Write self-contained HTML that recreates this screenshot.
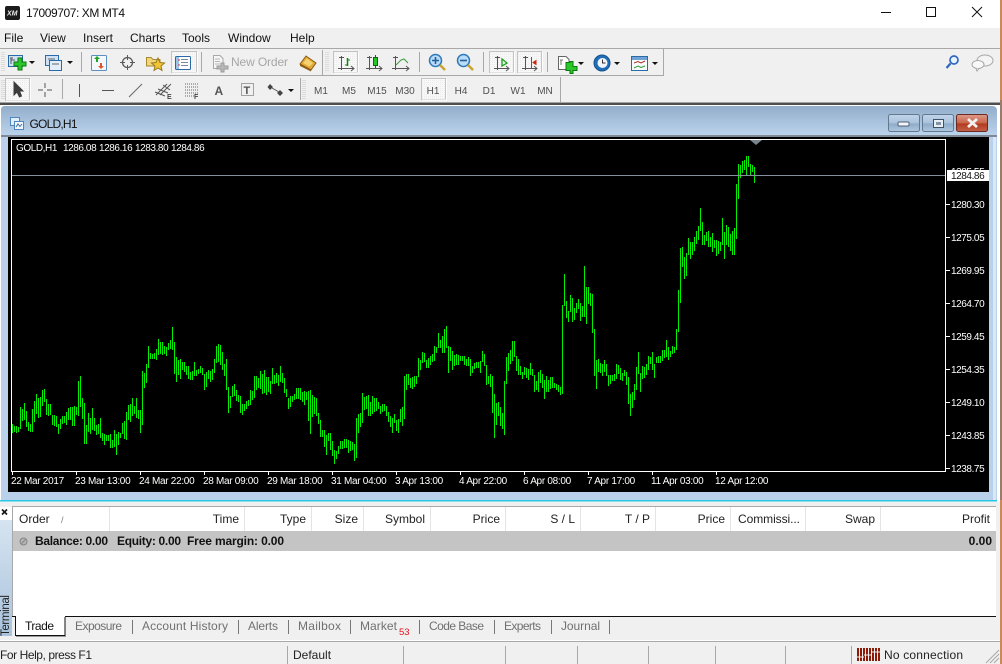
<!DOCTYPE html>
<html>
<head>
<meta charset="utf-8">
<style>
html,body{margin:0;padding:0;background:#fff;width:1002px;height:664px;overflow:hidden}
svg{display:block;position:absolute;left:0;top:0}
text{font-family:"Liberation Sans",sans-serif;font-size:12px;fill:#1a1a1a;white-space:pre}
.m text{fill:#111}
.tf text{font-size:10px;fill:#505050;text-anchor:middle}
.h text{text-anchor:end;fill:#222}
.c text{font-size:10px;fill:#fff}
.p text{letter-spacing:-.42px}
.d text{letter-spacing:-.3px}
.t text{fill:#707070}
.b text{font-weight:bold;fill:#111}
.s text{fill:#222}
.ic{shape-rendering:auto}
</style>
</head>
<body>
<svg width="1002" height="664" viewBox="0 0 1002 664" xmlns="http://www.w3.org/2000/svg">
<defs>
<linearGradient id="tb" x1="0" y1="0" x2="0" y2="1"><stop offset="0" stop-color="#93aecb"/><stop offset="1" stop-color="#b9d1ea"/></linearGradient>
<linearGradient id="wb" x1="0" y1="0" x2="0" y2="1"><stop offset="0" stop-color="#c2d5ea"/><stop offset=".5" stop-color="#a9c2dc"/><stop offset=".55" stop-color="#8eabc9"/><stop offset="1" stop-color="#b0c8e0"/></linearGradient>
<linearGradient id="wr" x1="0" y1="0" x2="0" y2="1"><stop offset="0" stop-color="#dd9a88"/><stop offset=".5" stop-color="#c8654c"/><stop offset=".55" stop-color="#b23a1e"/><stop offset="1" stop-color="#c4614a"/></linearGradient>
<linearGradient id="tv" x1="0" y1="0" x2="0" y2="1"><stop offset="0" stop-color="#d6e4f1"/><stop offset="1" stop-color="#a9c3dc"/></linearGradient>
<pattern id="ch" width="2" height="2" patternUnits="userSpaceOnUse"><rect width="2" height="2" fill="#f8f8f8"/><rect width="1" height="1" fill="#ececec"/></pattern>
</defs>

<!-- title bar -->
<rect x="0" y="0" width="1002" height="28" fill="#fff"/>
<rect x="5" y="6" width="15" height="14" rx="2" fill="#1b1b1b"/>
<text x="7" y="15.5" style="font-size:7px;font-weight:bold;font-style:italic;fill:#eee">XM</text>
<text x="26" y="17" textLength="99" style="font-size:12px;fill:#111">17009707: XM MT4</text>
<g stroke="#111" fill="none" shape-rendering="crispEdges">
<path d="M881 12.5H891"/>
<rect x="926.5" y="7.5" width="9" height="9"/>
</g>
<path d="M972 7L982 17M982 7L972 17" stroke="#111" fill="none"/>

<!-- menu bar + toolbars -->
<rect x="0" y="28" width="1000" height="77" fill="#f0f0f0"/>
<g class="m">
<text x="4" y="42">File</text><text x="40" y="42">View</text><text x="83" y="42">Insert</text><text x="130" y="42">Charts</text><text x="182" y="42">Tools</text><text x="228" y="42">Window</text><text x="290" y="42">Help</text>
</g>
<g shape-rendering="crispEdges">
<rect x="0" y="48" width="1000" height="1" fill="#a8a8a8"/>
<rect x="0" y="75" width="664" height="1" fill="#a8a8a8"/>
<rect x="663" y="49" width="1" height="27" fill="#a8a8a8"/>
<rect x="322" y="50" width="1" height="25" fill="#a8a8a8"/>
<rect x="560" y="77" width="1" height="25" fill="#a8a8a8"/>
<rect x="81" y="52" width="1" height="20" fill="#a8a8a8"/>
<rect x="201" y="52" width="1" height="20" fill="#a8a8a8"/>
<rect x="419" y="52" width="1" height="20" fill="#a8a8a8"/>
<rect x="483" y="52" width="1" height="20" fill="#a8a8a8"/>
<rect x="547" y="52" width="1" height="20" fill="#a8a8a8"/>
<rect x="62" y="79" width="1" height="20" fill="#a8a8a8"/>
<rect x="300" y="78" width="1" height="22" fill="#a8a8a8"/>
<!-- grips -->
<path d="M2 52V72M4 52V72M326 52V72M328 52V72M2 80V99M4 80V99M303 80V99M305 80V99" stroke="#c8c8c8" stroke-dasharray="1 1"/>
<!-- pressed boxes -->
<g fill="url(#ch)" stroke="#c4c4c4">
<rect x="171.500" y="51.500" width="25" height="21"/>
<rect x="333.500" y="51.500" width="24" height="21"/>
<rect x="489.500" y="51.500" width="24" height="21"/>
<rect x="517.500" y="51.500" width="24" height="21"/>
<rect x="5.500" y="78.500" width="24" height="22"/>
<rect x="421.500" y="78.500" width="24" height="21"/>
</g>
<path d="M197.500 52V73H172M358.500 52V73H334M514.500 52V73H490M542.500 52V73H518M30.500 79V101H6M446.500 79V100H422" stroke="#fff" fill="none"/>
<rect x="0" y="102" width="1000" height="1" fill="#a4a4a4"/>
<rect x="0" y="103" width="1000" height="2" fill="#4e4e4e"/>
</g>

<!-- toolbar row 1 icons -->
<g class="ic">
<!-- new chart -->
<rect x="8.500" y="55.500" width="14" height="11" fill="#cfe2f5" stroke="#2b6aa8"/>
<path d="M11 58V64M13 58H10M11 60H15" stroke="#555" fill="none"/>
<path d="M18 58h4v4h4v4h-4v4h-4v-4h-4v-4h4z" fill="#2cc52c" stroke="#0a7a0a"/>
<path d="M29 61h6l-3 3z" fill="#111"/>
<!-- profiles -->
<rect x="45.500" y="55.500" width="13" height="10" fill="#cfe2f5" stroke="#2b6aa8"/>
<rect x="49.500" y="60.500" width="12" height="10" fill="#e2eefa" stroke="#2b6aa8"/>
<path d="M48 59H55M52 64H59" stroke="#666"/>
<path d="M67 61h6l-3 3z" fill="#111"/>
<!-- market watch -->
<rect x="91.500" y="55.500" width="15" height="15" rx="1" fill="#f4f8fc" stroke="#5b8fc0"/>
<path d="M96 62V59H94L97 56L100 59H98V62z" fill="#1fa51f"/>
<path d="M100 63V66H98L101 69L104 66H102V63z" fill="#e0552a"/>
<!-- crosshair -->
<circle cx="127.500" cy="62.500" r="5" fill="none" stroke="#5a5a5a" stroke-width="1.300"/>
<path d="M127.500 55V60M127.500 65V70M120 62.500H125M130 62.500H135" stroke="#5a5a5a"/>
<!-- folder star -->
<path d="M146.500 66V57.500H151L153 59.500H160V66z" fill="#f4d67a" stroke="#a88a2e"/>
<path d="M158 58L160 62.500L164.500 63L161 66L162 70.500L158 68L154 70.500L155 66L151.500 63L156 62.500z" fill="#f2c632" stroke="#977a1c"/>
<!-- navigator -->
<rect x="175.500" y="56.500" width="15" height="13" rx="1" fill="#fff" stroke="#2b6aa8"/>
<rect x="176" y="57" width="3" height="12" fill="#9cc2e6"/>
<path d="M181 59.500H188M181 62.500H188M181 65.500H188" stroke="#7a8a9a"/>
<path d="M178 60H180M178 65H180" stroke="#d33"/>
<!-- new order -->
<path d="M213.500 55.500H220L223 58.500V68.500H213.500z" fill="#f6f6f6" stroke="#a8a8a8"/>
<path d="M215 59H220M215 61.500H220M215 64H220" stroke="#b5b5b5"/>
<path d="M221 63h3v3h4v3h-4v3h-3v-3h-4v-3h4z" fill="#b8b8b8" stroke="#9a9a9a"/>
<!-- autotrading gold -->
<path d="M300 64L306 56L316 63L311 70z" fill="#e1a93a" stroke="#8a5c12"/>
<path d="M303 63L307 58.500L313 63L309.500 66.500z" fill="#f6d36e"/>
<path d="M300 64L311 70V71.500L300 66z" fill="#8f5e14"/>
<!-- bar chart -->
<g stroke="#555" fill="none">
<path d="M341.500 56V70M339 57.500H344M338 68.500H354M351 66L354 68.500L351 71"/>
<path d="M347.500 58V66" stroke="#0a8a0a" stroke-width="1.500"/><path d="M347 60H350M345 65H348" stroke="#0a8a0a"/>
<path d="M369.500 56V70M367 57.500H372M366 68.500H382M379 66L382 68.500L379 71"/>
<path d="M395.500 56V70M393 57.500H398M392 68.500H409M406 66L409 68.500L406 71"/>
</g>
<rect x="373.500" y="57.500" width="4" height="8" fill="#28c428" stroke="#0b6a0b"/><path d="M375.500 55V57M375.500 66V68" stroke="#0b6a0b"/>
<path d="M396 65L401 60L404 59L408 63" stroke="#3a9a3a" fill="none"/>
<!-- zoom -->
<circle cx="435.500" cy="60.500" r="6" fill="#bcdcf5" stroke="#2f79bd" stroke-width="1.500"/>
<path d="M432 60.500H439M435.500 57V64" stroke="#1d5f9f" stroke-width="1.600"/>
<path d="M440 65L445 70" stroke="#c7a42e" stroke-width="2.500"/>
<circle cx="463.500" cy="60.500" r="6" fill="#bcdcf5" stroke="#2f79bd" stroke-width="1.500"/>
<path d="M460 60.500H467" stroke="#1d5f9f" stroke-width="1.600"/>
<path d="M468 65L473 70" stroke="#c7a42e" stroke-width="2.500"/>
<!-- shift/autoscroll -->
<g stroke="#555" fill="none">
<path d="M497.500 56V70M495 57.500H500M494 68.500H509M506 66L509 68.500L506 71"/>
<path d="M525.500 56V70M523 57.500H528M522 68.500H537M534 66L537 68.500L534 71"/>
</g>
<path d="M502 59L507 63L502 66z" fill="none" stroke="#18a018" stroke-width="1.300"/>
<path d="M531.500 57V68" stroke="#3b5fa0"/><path d="M536 60.500L533 62.500L536 64.500z" fill="#c8280c" stroke="#c8280c"/>
<!-- templates -->
<path d="M558.500 56.500H566L569 59.500V69.500H558.500z" fill="#fff" stroke="#666"/>
<path d="M561 60V65M560 60H563" stroke="#777"/>
<path d="M566 63h4v-1h3v5h4v4h-4v3h-3v-3h-4z" fill="#2cc52c" stroke="#0a7a0a" transform="translate(0,-0.500)"/>
<path d="M578 62h6l-3 3z" fill="#111"/>
<!-- clock -->
<circle cx="602" cy="63" r="8" fill="#1f6fb8" stroke="#13528f"/>
<circle cx="602.500" cy="63" r="5" fill="#f2f6fa"/>
<path d="M602.500 59.500V63H605.500" stroke="#333" fill="none"/>
<path d="M614 62h6l-3 3z" fill="#111"/>
<!-- indicators -->
<rect x="631.500" y="56.500" width="16" height="14" fill="#f8fbfe" stroke="#2b6aa8"/>
<rect x="632" y="57" width="15" height="3" fill="#6fa3d6"/>
<path d="M634 63L638 61.500L641 63L645 61" stroke="#a8321e" fill="none"/>
<path d="M634 68L638 66L641 67.500L645 66" stroke="#2a9a2a" fill="none"/>
<path d="M652 62h6l-3 3z" fill="#111"/>
<!-- search, chat -->
<circle cx="954" cy="60" r="4" fill="#e8f2fb" stroke="#2e66bf" stroke-width="1.700"/>
<path d="M950.500 63.500L946.500 68" stroke="#2e66bf" stroke-width="2.200"/>
<ellipse cx="985" cy="60.500" rx="8" ry="5.500" fill="#f4f4f4" stroke="#a6a6a6"/>
<ellipse cx="978" cy="64.500" rx="6" ry="4" fill="#f8f8f8" stroke="#a6a6a6"/>
<path d="M976 68.500L977 71L979 68.500" fill="#f8f8f8" stroke="#a6a6a6"/>
</g>
<text x="231" y="66" textLength="57" style="fill:#a6a6a6;font-size:12px">New Order</text>

<!-- toolbar row 2 -->
<path d="M14 82V95L17 92L19.500 97L21.500 96L19.500 91H23z" fill="#3c3c3c" stroke="#3c3c3c"/>
<path d="M45 83V88M45 92V97M38 90H43M47 90H52" stroke="#555" shape-rendering="crispEdges"/>
<path d="M79.500 84V97M102 90.500H114" stroke="#555" shape-rendering="crispEdges"/>
<path d="M129 97L142 84" stroke="#666"/>
<path d="M156 95L167 84M160 95L171 84M158 89L168 93M155 92L165 96M163 85L170 90" stroke="#555" fill="none"/>
<text x="167" y="99" style="font-size:7px;font-weight:bold;fill:#444">E</text>
<path d="M185 84H198M185 87H198M185 90H198M185 93H198M185 96H194" stroke="#666" stroke-dasharray="1 1" shape-rendering="crispEdges"/>
<text x="194" y="99" style="font-size:7px;font-weight:bold;fill:#444">F</text>
<text x="214.500" y="95" style="font-size:12px;font-weight:bold;fill:#555">A</text>
<rect x="241.500" y="83.500" width="12" height="12" fill="none" stroke="#555" stroke-dasharray="1 1" shape-rendering="crispEdges"/>
<text x="243.500" y="94" style="font-size:11px;font-weight:bold;fill:#555">T</text>
<path d="M270 84L273 87L270 90L267.500 87zM280 90L283 93L280 96L277 93z" fill="#444"/>
<path d="M272 88L279 92" stroke="#555"/>
<path d="M288 89h6l-3 3z" fill="#111"/>
<g class="tf">
<text x="321" y="94">M1</text><text x="349" y="94">M5</text><text x="377" y="94">M15</text><text x="405" y="94">M30</text><text x="433" y="94">H1</text><text x="461" y="94">H4</text><text x="489" y="94">D1</text><text x="518" y="94">W1</text><text x="545" y="94">MN</text>
</g>

<!-- chart window -->
<path d="M1 501V110Q1 106 5 106H992Q997 106 997 111V501z" fill="#b9d1ea"/>
<path d="M1 134V110Q1 106 5 106H992Q997 106 997 111V134z" fill="url(#tb)"/>
<rect x="0" y="500" width="997" height="1.500" fill="#27c7e6" shape-rendering="crispEdges"/>
<rect x="1" y="135" width="996" height="2" fill="#7f8a96" shape-rendering="crispEdges"/>
<rect x="993" y="137" width="3" height="363" fill="#d9e8f6" shape-rendering="crispEdges"/>
<rect x="8" y="137" width="981" height="355" fill="#000" shape-rendering="crispEdges"/>
<!-- window icon -->
<rect x="10.500" y="117.500" width="9" height="8" fill="#e2eefa" stroke="#4f86bd"/>
<rect x="14.500" y="121.500" width="9" height="8" fill="#f2f7fc" stroke="#4f86bd"/>
<path d="M16 127L18 124L20 126.500L22 124" stroke="#3b6ea3" fill="none"/>
<text x="29.500" y="128" textLength="48" style="font-size:12px;fill:#111">GOLD,H1</text>
<!-- window buttons -->
<rect x="888.500" y="114.500" width="31" height="17" rx="2" fill="url(#wb)" stroke="#62788e"/>
<rect x="898" y="122" width="11" height="4" rx="1" fill="#f4f7fa" stroke="#4c5f73"/>
<rect x="922.500" y="114.500" width="31" height="17" rx="2" fill="url(#wb)" stroke="#62788e"/>
<rect x="933.500" y="119.500" width="10" height="8" fill="#e8eef4" stroke="#3f5266"/>
<rect x="936" y="122" width="5" height="3" fill="#7f94aa"/>
<rect x="956.500" y="114.500" width="31" height="17" rx="2" fill="url(#wr)" stroke="#6a2a22"/>
<path d="M968 119L977 127M977 119L968 127" stroke="#f2f2f2" stroke-width="2.800"/>

<!-- plot -->
<path id="bars" d="" stroke="#00f000" stroke-width="1" fill="none" shape-rendering="crispEdges"/>
<rect x="11.500" y="139.500" width="934" height="332" fill="none" stroke="#fff" shape-rendering="crispEdges"/>
<rect x="12" y="175" width="933" height="1" fill="#84909c" shape-rendering="crispEdges"/>
<path d="M750 140H762L756 145z" fill="#77848f"/>
<g shape-rendering="crispEdges" fill="#fff">
<rect x="946" y="204" width="4" height="1"/><rect x="946" y="237" width="4" height="1"/><rect x="946" y="270" width="4" height="1"/><rect x="946" y="303" width="4" height="1"/><rect x="946" y="336" width="4" height="1"/><rect x="946" y="369" width="4" height="1"/><rect x="946" y="402" width="4" height="1"/><rect x="946" y="435" width="4" height="1"/><rect x="946" y="468" width="4" height="1"/>
<rect x="12" y="472" width="1" height="3"/><rect x="76" y="472" width="1" height="3"/><rect x="140" y="472" width="1" height="3"/><rect x="204" y="472" width="1" height="3"/><rect x="268" y="472" width="1" height="3"/><rect x="332" y="472" width="1" height="3"/><rect x="396" y="472" width="1" height="3"/><rect x="460" y="472" width="1" height="3"/><rect x="524" y="472" width="1" height="3"/><rect x="588" y="472" width="1" height="3"/><rect x="652" y="472" width="1" height="3"/><rect x="716" y="472" width="1" height="3"/>
</g>
<g class="c p">
<text x="16" y="151">GOLD,H1</text>
<text x="63" y="151">1286.08</text>
<text x="99" y="151">1286.16</text>
<text x="135" y="151">1283.80</text>
<text x="171" y="151">1284.86</text>
<text x="951" y="175">1285.55</text>
<text x="951" y="208">1280.30</text>
<text x="951" y="241">1275.05</text>
<text x="951" y="274">1269.95</text>
<text x="951" y="307">1264.70</text>
<text x="951" y="340">1259.45</text>
<text x="951" y="373">1254.35</text>
<text x="951" y="406">1249.10</text>
<text x="951" y="439">1243.85</text>
<text x="951" y="472">1238.75</text>
</g>
<g class="c d">
<text x="11" y="484">22 Mar 2017</text>
<text x="75" y="484">23 Mar 13:00</text>
<text x="139" y="484">24 Mar 22:00</text>
<text x="203" y="484">28 Mar 09:00</text>
<text x="267" y="484">29 Mar 18:00</text>
<text x="331" y="484">31 Mar 04:00</text>
<text x="395" y="484">3 Apr 13:00</text>
<text x="459" y="484">4 Apr 22:00</text>
<text x="523" y="484">6 Apr 08:00</text>
<text x="587" y="484">7 Apr 17:00</text>
<text x="651" y="484">11 Apr 03:00</text>
<text x="715" y="484">12 Apr 12:00</text>
</g>
<rect x="947" y="170" width="42" height="11" fill="#fff" shape-rendering="crispEdges"/>
<text x="951" y="179" style="font-size:10px;fill:#111;letter-spacing:-.42px">1284.86</text>

<!-- terminal -->
<rect x="0" y="501.500" width="1000" height="162.500" fill="#f0f0f0"/>
<rect x="0" y="520" width="12" height="116" fill="url(#tv)"/>
<rect x="0" y="507" width="12" height="13" fill="#fff"/>
<path d="M2 509.500L7 514.500M7 509.500L2 514.500" stroke="#111" stroke-width="1.600"/>
<text transform="translate(9,636) rotate(-90)" textLength="41" style="font-size:11.500px;fill:#222">Terminal</text>
<rect x="12" y="506" width="984" height="110" fill="#fff" shape-rendering="crispEdges"/>
<rect x="12" y="506" width="984" height="1" fill="#a8a8a8" shape-rendering="crispEdges"/>
<rect x="12" y="506" width="1" height="110" fill="#a8a8a8" shape-rendering="crispEdges"/>
<path d="M109.500 507V531M244.500 507V531M311.500 507V531M363.500 507V531M430.500 507V531M505.500 507V531M580.500 507V531M655.500 507V531M730.500 507V531M805.500 507V531M880.500 507V531" stroke="#e4e4e4" shape-rendering="crispEdges"/>
<text x="19" y="523" style="fill:#222">Order</text>
<text x="61" y="523" style="fill:#777;font-size:9px">/</text>
<g class="h">
<text x="239" y="523">Time</text><text x="306" y="523">Type</text><text x="358" y="523">Size</text><text x="425" y="523">Symbol</text><text x="500" y="523">Price</text><text x="575" y="523">S / L</text><text x="650" y="523">T / P</text><text x="725" y="523">Price</text><text x="738" y="523" text-anchor="start" style="text-anchor:start" textLength="62">Commissi...</text><text x="875" y="523">Swap</text><text x="990" y="523">Profit</text>
</g>
<rect x="13" y="531" width="983" height="20" fill="#c4c4c4" shape-rendering="crispEdges"/>
<circle cx="23.500" cy="541.500" r="3.500" fill="#b4b4b4" stroke="#858585"/>
<path d="M21.500 543.500L25.500 539.500" stroke="#858585"/>
<g class="b">
<text x="35" y="545" textLength="73">Balance: 0.00</text><text x="117" y="545" textLength="64">Equity: 0.00</text><text x="187" y="545" textLength="97">Free margin: 0.00</text><text x="992" y="545" text-anchor="end">0.00</text>
</g>
<rect x="12" y="616" width="984" height="1" fill="#111" shape-rendering="crispEdges"/>
<path d="M15.500 616V635.500H65V616" fill="#fff" stroke="#111"/>
<rect x="16" y="615" width="49" height="2" fill="#fff" shape-rendering="crispEdges"/>
<rect x="16" y="636" width="50" height="1" fill="#999" shape-rendering="crispEdges"/>
<text x="25" y="630" textLength="29" style="fill:#111">Trade</text>
<g class="t">
<text x="75" y="630" textLength="47">Exposure</text><text x="142" y="630" textLength="86">Account History</text><text x="248" y="630" textLength="30">Alerts</text><text x="298" y="630" textLength="43">Mailbox</text><text x="360" y="630" textLength="37">Market</text><text x="429" y="630" textLength="55">Code Base</text><text x="504" y="630" textLength="37">Experts</text><text x="561" y="630" textLength="39">Journal</text>
</g>
<text x="399" y="635" style="font-size:9.500px;fill:#e8101c">53</text>
<path d="M132.500 620V634M238.500 620V634M288.500 620V634M350.500 620V634M419.500 620V634M494.500 620V634M551.500 620V634M609.500 620V634" stroke="#777" shape-rendering="crispEdges"/>

<!-- status bar -->
<rect x="0" y="641" width="1000" height="1" fill="#a8a8a8" shape-rendering="crispEdges"/>
<rect x="0" y="640" width="1000" height="1" fill="#fff" shape-rendering="crispEdges"/>
<path d="M287.500 646V664M403.500 646V664M505.500 646V664M577.500 646V664M648.500 646V664M715.500 646V664M785.500 646V664M851.500 646V664" stroke="#a8a8a8" shape-rendering="crispEdges"/>
<g class="s"><text x="0" y="659" textLength="92">For Help, press F1</text><text x="293" y="659">Default</text><text x="884" y="659" textLength="79">No connection</text></g>
<g shape-rendering="crispEdges">
<rect x="857" y="648" width="23" height="13" fill="#8c1a06"/>
<path d="M859.500 648V661M862.500 648V661M865.500 648V661M868.500 648V661M871.500 648V661M874.500 648V661M877.500 648V661" stroke="#f0f0f0"/>
<path d="M857 657H864M864 655H872M872 652H880" stroke="#f0f0f0"/>
</g>
<path d="M986 663L999 650M990 663L999 654M994 663L999 658" stroke="#a8a8a8"/>
<!-- right edge strip -->
<rect x="1000" y="0" width="2" height="664" fill="#c98a5a" shape-rendering="crispEdges"/>
<rect x="1000" y="100" width="2" height="400" fill="#9a7a6a" shape-rendering="crispEdges"/>
</svg>
<script>
var a=[342,369,348,366,348,369,351,366,291,357,297,333,279,330,303,351,336,363,342,366,297,366,273,336,252,312,264,324,261,321,240,288,237,276,267,315,282,318,282,315,315,345,315,348,318,351,342,372,327,357,318,342,318,339,306,345,294,330,291,330,291,348,288,348,291,315,213,318,198,291,264,327,279,402,345,402,309,366,324,372,294,360,324,363,345,375,342,372,324,384,369,393,372,405,375,393,375,393,372,414,390,414,360,411,372,435,366,405,369,384,339,372,333,387,306,390,285,330,282,336,264,318,288,312,264,324,300,327,300,369,183,345,189,234,162,219,108,174,129,147,132,147,129,147,117,150,87,135,96,132,96,135,108,132,111,138,99,120,90,117,51,120,96,192,141,216,150,195,147,207,156,180,156,186,168,195,168,207,186,210,183,210,156,198,180,198,177,192,168,189,174,195,192,240,186,231,180,207,183,216,177,210,147,189,108,159,102,156,105,165,126,180,162,198,147,240,231,309,258,294,228,261,222,258,240,273,255,276,258,309,282,315,282,303,273,297,270,288,240,285,243,270,198,264,198,240,204,234,183,237,192,252,180,249,201,255,201,246,213,252,174,222,195,222,189,219,195,228,168,216,189,219,204,249,237,261,264,297,258,291,258,276,252,270,234,267,234,267,234,270,246,276,243,285,246,270,243,333,240,372,255,321,261,312,264,318,309,342,330,381,360,381,360,411,375,435,369,393,369,420,393,438,420,462,423,447,408,432];
var b=[543,567,543,567,537,564,537,564,540,579,543,573,546,570,552,603,474,594,462,519,459,501,399,489,411,450,408,447,405,468,426,468,408,462,414,456,414,453,426,447,438,462,432,456,432,453,438,468,456,486,468,501,474,519,462,489,480,513,477,519,447,486,441,498,348,477,342,390,342,375,354,384,351,387,348,381,348,372,294,351,300,330,276,309,279,306,300,324,294,324,288,315,282,306,258,303,261,279,219,264,240,264,228,279,207,279,198,264,258,339,261,303,273,330,285,318,282,315,285,315,288,303,288,303,288,315,297,318,291,318,297,348,318,339,309,327,306,324,306,324,303,339,273,306,282,318,315,375,348,372,342,381,348,459,402,534,429,495,426,468,441,498,459,507,363,525,291,372,279,333,270,312,243,303,243,291,288,333,297,345,318,345,336,357,321,345,324,354,327,360,309,345,327,348,345,396,363,390,336,396,330,369,342,384,360,417,348,396,360,396,351,387,351,384,369,384,372,390,375,396,381,405,135,402,42,138,123,174,153,186,105,156,114,186,144,180,129,159,117,147,129,183,138,171,18,171,81,192,81,132,99,138,102,219,207,348,300,387,297,336,309,339,312,348,300,336,312,348,345,378,345,372,345,363,342,363,312,357,315,342,324,360,339,363,330,348,336,375,351,432,402,468,396,444,372,420,321,390,276,342,339,396,318,357,321,354,312,345,288,330,291,312,276,330,312,354,291,309,288,309,288,309,270,303,270,294,240,291,261,300,273,291,258,282,261,279,207,270,90,216];
var c=[248,303,247,267,257,279,253,276,238,255,242,259,242,255,237,251,231,244,226,240,208,231,222,245,235,245,232,241,231,247,237,247,233,252,240,248,240,256,241,254,242,251,218,245,232,259,225,245,227,247,234,251,231,255,228,255,184,239,164,199,165,178,161,173,160,170,156,175,156,167,164,175,165,172,167,183];
var d='',i,x=12;
for(i=0;i<a.length;i+=2){d+='M'+(x+.5)+' '+(310+a[i]/3)+'V'+(310+a[i+1]/3);x+=2}
x=340;
for(i=0;i<b.length;i+=2){d+='M'+(x+.5)+' '+(260+b[i]/3)+'V'+(260+b[i+1]/3);x+=2}
x=680;
for(i=0;i<c.length;i+=2){d+='M'+(x+.5)+' '+c[i]+'V'+c[i+1];x+=2}
document.getElementById('bars').setAttribute('d',d);
</script>
</body>
</html>
